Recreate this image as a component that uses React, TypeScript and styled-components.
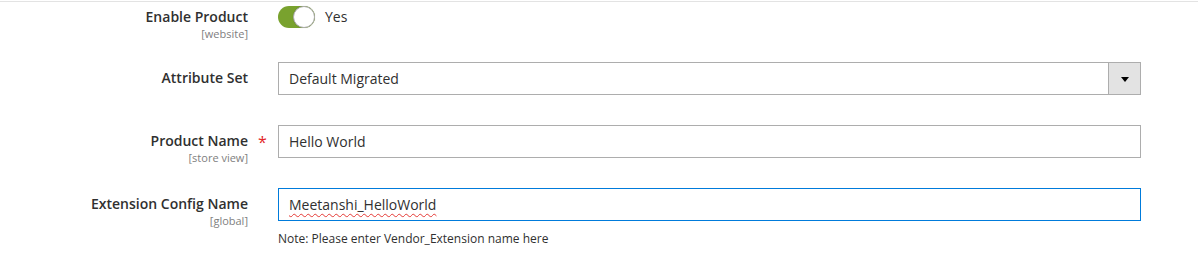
import React from "react";
import styled, { createGlobalStyle } from "styled-components";

const Global = createGlobalStyle`
  html, body { margin: 0; padding: 0; background: #ffffff; }
  body { font-family: "Open Sans", "Noto Sans", Arial, sans-serif; color: #303030; }
`;

const Page = styled.div`
  margin-top: 1px;
  border-top: 1px solid #e3e3e3;
  padding-top: 4px;
  display: grid;
  grid-template-rows: 56px 63px 63px auto;
`;

const Field = styled.div`
  display: grid;
  grid-template-columns: 248px 30px 863px;
  align-items: start;
`;

const LabelBlock = styled.div<{ $pt: number }>`
  padding-top: ${(p) => p.$pt}px;
  text-align: right;
  display: flex;
  flex-direction: column;
  align-items: flex-end;
`;

const LabelTitle = styled.span`
  font-size: 14px;
  font-weight: 600;
  line-height: 20px;
  color: #303030;
  white-space: nowrap;
`;

const Scope = styled.span`
  font-size: 11px;
  line-height: 13px;
  color: #808080;
  white-space: nowrap;
`;

const Required = styled.span`
  padding-left: 10px;
  padding-top: 7px;
  font-size: 16px;
  line-height: 20px;
  color: #e22626;
`;

const Control = styled.div`
  display: flex;
  flex-direction: column;
`;

const SwitchRow = styled.div`
  display: flex;
  align-items: center;
  gap: 10px;
  height: 22px;
`;

const Track = styled.span<{ $on: boolean }>`
  position: relative;
  display: block;
  width: 37px;
  height: 22px;
  border-radius: 11px;
  background: ${(p) => (p.$on ? "#79a22e" : "#e3e3e3")};
`;

const Knob = styled.span<{ $on: boolean }>`
  position: absolute;
  top: 0;
  ${(p) => (p.$on ? "right: 0;" : "left: 0;")}
  box-sizing: border-box;
  width: 22px;
  height: 22px;
  border-radius: 50%;
  background: #ffffff;
  border: 1px solid #adadad;
  box-shadow: 0 0 1px rgba(0, 0, 0, 0.2);
`;

const SwitchText = styled.span`
  font-size: 14px;
  line-height: 20px;
  color: #303030;
`;

const Box = styled.div<{ $focus?: boolean }>`
  box-sizing: border-box;
  height: 33px;
  width: 863px;
  border: 1px solid ${(p) => (p.$focus ? "#007bdb" : "#adadad")};
  background: #ffffff;
  display: flex;
  align-items: center;
  font-size: 14px;
  color: #303030;
`;

const BoxText = styled.span<{ $misspelled?: boolean }>`
  flex: 1;
  padding: 0 10px;
  line-height: 20px;
  white-space: nowrap;
  span {
    ${(p) =>
      p.$misspelled
        ? `text-decoration: underline wavy #e53935; text-decoration-thickness: 1px; text-underline-offset: 3px;`
        : ""}
  }
`;

const SelectButton = styled.span`
  box-sizing: border-box;
  width: 32px;
  height: 31px;
  border-left: 1px solid #adadad;
  background: #e3e3e3;
  display: flex;
  align-items: center;
  justify-content: center;
`;

const Arrow = styled.span`
  width: 0;
  height: 0;
  border-left: 4px solid transparent;
  border-right: 4px solid transparent;
  border-top: 5px solid #000000;
  margin-top: 1px;
`;

const Note = styled.div`
  margin-top: 10px;
  font-size: 12px;
  line-height: 16px;
  color: #303030;
`;

export default function App() {
  return (
    <>
      <Global />
      <Page>
        <Field>
          <LabelBlock $pt={1}>
            <LabelTitle>Enable Product</LabelTitle>
            <Scope>[website]</Scope>
          </LabelBlock>
          <span />
          <Control>
            <SwitchRow>
              <Track $on>
                <Knob $on />
              </Track>
              <SwitchText>Yes</SwitchText>
            </SwitchRow>
          </Control>
        </Field>

        <Field>
          <LabelBlock $pt={6}>
            <LabelTitle>Attribute Set</LabelTitle>
          </LabelBlock>
          <span />
          <Control>
            <Box>
              <BoxText>
                <span>Default Migrated</span>
              </BoxText>
              <SelectButton>
                <Arrow />
              </SelectButton>
            </Box>
          </Control>
        </Field>

        <Field>
          <LabelBlock $pt={6}>
            <LabelTitle>Product Name</LabelTitle>
            <Scope>[store view]</Scope>
          </LabelBlock>
          <Required>*</Required>
          <Control>
            <Box>
              <BoxText>
                <span>Hello World</span>
              </BoxText>
            </Box>
          </Control>
        </Field>

        <Field>
          <LabelBlock $pt={6}>
            <LabelTitle>Extension Config Name</LabelTitle>
            <Scope>[global]</Scope>
          </LabelBlock>
          <span />
          <Control>
            <Box $focus>
              <BoxText $misspelled>
                <span>Meetanshi_HelloWorld</span>
              </BoxText>
            </Box>
            <Note>Note: Please enter Vendor_Extension name here</Note>
          </Control>
        </Field>
      </Page>
    </>
  );
}
